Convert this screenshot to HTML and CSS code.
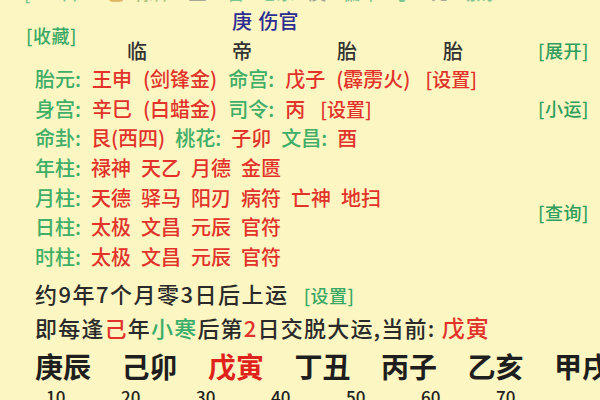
FILE: index.html
```html
<!DOCTYPE html>
<html lang="zh-CN">
<head>
<meta charset="utf-8">
<link rel="stylesheet" href="styles.css">
</head>
<body>
<div class="page">
  <div class="topcut">
    <div class="topcut-line">
      <span class="g c1">[</span><span class="g c2">日</span><span class="o c3">己</span><span class="ol c4">禄神</span><span class="gr c5">正</span><span class="g c6">官</span><span class="g c7">七杀</span><span class="gr c8">庚</span><span class="g c9">偏印</span><span class="g c10">丁</span><span class="gr c11">比</span><span class="g c12">劫财</span>
    </div>
  </div>

  <div class="header">
    <div class="fav">[收藏]</div>
    <div class="top-god">庚 伤官</div>
    <div class="stage s1">临</div>
    <div class="stage s2">帝</div>
    <div class="stage s3">胎</div>
    <div class="stage s4">胎</div>
    <div class="btn-green expand">[展开]</div>
  </div>

  <div class="main">
    <div class="lines">
      <div class="line wide"><span class="g">胎元:</span> <span class="r">王申 (剑锋金)</span> <span class="g">命宫:</span> <span class="r">戊子 (霹雳火)</span> <span class="r set">[设置]</span></div>
      <div class="line wide"><span class="g">身宫:</span> <span class="r">辛巳 (白蜡金)</span> <span class="g">司令:</span> <span class="r">丙</span> <span class="r set">[设置]</span></div>
      <div class="line"><span class="g">命卦:</span> <span class="r">艮(西四)</span> <span class="g">桃花:</span> <span class="r">子卯</span> <span class="g">文昌:</span> <span class="r">酉</span></div>
      <div class="line"><span class="g">年柱:</span> <span class="r">禄神 天乙 月德 金匮</span></div>
      <div class="line"><span class="g">月柱:</span> <span class="r">天德 驿马 阳刃 病符 亡神 地扫</span></div>
      <div class="line"><span class="g">日柱:</span> <span class="r">太极 文昌 元辰 官符</span></div>
      <div class="line"><span class="g">时柱:</span> <span class="r">太极 文昌 元辰 官符</span></div>
    </div>
    <div class="side">
      <div class="btn-green small-luck">[小运]</div>
      <div class="btn-green query">[查询]</div>
    </div>
  </div>

  <div class="start-line">约9年7个月零3日后上运<span class="set-green">[设置]</span></div>
  <div class="jiao-line">即每逢<span class="r">己</span>年<span class="g2">小寒</span>后第<span class="r">2</span>日交脱大运,当前: <span class="r cur-name">戊寅</span></div>

  <div class="dayun">
    <span>庚辰</span><span>己卯</span><span class="cur">戊寅</span><span>丁丑</span><span>丙子</span><span>乙亥</span><span>甲戌</span>
  </div>
  <div class="ages">
    <span>10</span><span>20</span><span>30</span><span>40</span><span>50</span><span>60</span><span>70</span>
  </div>
</div>
</body>
</html>
```

FILE: styles.css
```css
html, body {
  margin: 0;
  padding: 0;
}
body {
  width: 600px;
  height: 400px;
  overflow: hidden;
  background: #fcf6c3;
  font-family: "Noto Sans CJK SC", "Noto Sans", sans-serif;
  font-weight: 500;
  color: #2a2a2a;
}
.page {
  width: 600px;
  height: 400px;
  overflow: hidden;
}

/* clipped row at the very top */
.topcut {
  height: 5px;
  overflow: hidden;
}
.topcut-line {
  margin-top: -19px;
  font-size: 18px;
  line-height: 22px;
  white-space: nowrap;
  display: flex;
}
.topcut-line .c1 { margin-left: 24px; }
.topcut-line .c2 { margin-left: 30px; }
.topcut-line .c3 { margin-left: 28px; }
.topcut-line .c4 { margin-left: 10px; }
.topcut-line .c5 { margin-left: 18px; }
.topcut-line .c6 { margin-left: 20px; }
.topcut-line .c7 { margin-left: 14px; }
.topcut-line .c8 { margin-left: 14px; }
.topcut-line .c9 { margin-left: 16px; }
.topcut-line .c10 { margin-left: 16px; }
.topcut-line .c11 { margin-left: 18px; }
.topcut-line .c12 { margin-left: 10px; }
.topcut-line .g { color: #7cc690; }
.topcut-line .o { color: #e0b660; }
.topcut-line .ol { color: #aabe78; }
.topcut-line .gr { color: #a8a898; }

/* header grid */
.header {
  display: grid;
  grid-template-columns: 127px 105px 105px 106px 95px 1fr;
  grid-template-rows: 31px 28px;
  align-items: center;
}
.fav {
  grid-column: 1;
  grid-row: 1 / 3;
  padding-left: 26px;
  font-size: 18px;
  color: #3aa865;
  letter-spacing: 0.5px;
}
.top-god {
  grid-column: 3 / 5;
  grid-row: 1;
  font-size: 20px;
  color: #2c2c92;
  white-space: nowrap;
  word-spacing: 2px;
}
.stage {
  grid-row: 2;
  font-size: 20px;
  color: #333;
}
.s1 { grid-column: 2; }
.s2 { grid-column: 3; }
.s3 { grid-column: 4; }
.s4 { grid-column: 5; }
.expand {
  grid-column: 6;
  grid-row: 2;
}
.btn-green {
  font-size: 18px;
  color: #2f9e5c;
  white-space: nowrap;
  letter-spacing: 0.5px;
}

/* main info block */
.main {
  display: flex;
}
.lines {
  flex: 1;
  padding-left: 35px;
}
.line {
  font-size: 20px;
  line-height: 29.7px;
  height: 29.7px;
  white-space: nowrap;
  word-spacing: 5.5px;
}
.line.wide {
  word-spacing: 6.5px;
}
.g { color: #3fae66; }
.r { color: #e2322a; }
.g2 { color: #3aad6a; }
.set {
  margin-left: 4px;
  font-size: 19px;
}
.side {
  width: 62px;
  padding-top: 29.7px;
  display: flex;
  flex-direction: column;
}
.small-luck {
  line-height: 29.7px;
}
.query {
  margin-top: 75px;
  line-height: 29.7px;
}

.start-line {
  margin-top: 4px;
  padding-left: 35px;
  font-size: 22px;
  letter-spacing: 1.5px;
  line-height: 34px;
  height: 34px;
  white-space: nowrap;
}
.set-green {
  margin-left: 15px;
  font-size: 18px;
  letter-spacing: 0.5px;
  color: #3aa865;
}
.jiao-line {
  padding-left: 35px;
  font-size: 22px;
  letter-spacing: 1.2px;
  line-height: 34px;
  height: 34px;
  white-space: nowrap;
}
.cur-name {
  font-size: 23px;
}

.dayun {
  margin-top: 5px;
  padding-left: 35px;
  display: flex;
  gap: 30.5px;
  font-size: 28px;
  font-weight: 700;
  line-height: 34px;
  height: 36px;
  white-space: nowrap;
  color: #1e1e1e;
}
.dayun .cur {
  color: #e0221c;
}
.ages {
  padding-left: 46px;
  display: flex;
  font-size: 17px;
  line-height: 24px;
  white-space: nowrap;
  color: #222;
}
.ages span {
  width: 75px;
  flex: none;
}
```
